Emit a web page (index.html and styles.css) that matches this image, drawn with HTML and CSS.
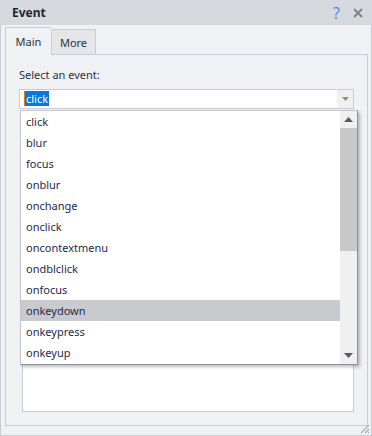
FILE: index.html
```html
<!DOCTYPE html>
<html lang="en">
<head>
    <meta charset="UTF-8">
    <title>Event</title>
    <link rel="stylesheet" href="styles.css">
</head>
<body>
    <div class="window">
        <div class="titlebar">
            <span class="title">Event</span>
            <span class="tb-icons">
                <span class="help">?</span>
                <svg class="close" width="10" height="10" viewBox="0 0 10 10"><path d="M1 1L9 9M9 1L1 9" stroke="#7a7f88" stroke-width="1.8"/></svg>
            </span>
        </div>

        <div class="tabs">
            <div class="tab active">Main</div>
            <div class="tab">More</div>
        </div>

        <div class="panel">
            <div class="label">Select an event:</div>
            <div class="combo">
                <span class="combo-text"><span class="sel">click</span></span>
                <span class="combo-btn">
                    <svg width="7" height="4" viewBox="0 0 7 4"><path d="M0 0H7L3.5 4Z" fill="#8a8d93"/></svg>
                </span>
            </div>
            <div class="body-box"></div>
        </div>

        <div class="dropdown">
            <ul class="items">
                <li>click</li>
                <li>blur</li>
                <li>focus</li>
                <li>onblur</li>
                <li>onchange</li>
                <li>onclick</li>
                <li>oncontextmenu</li>
                <li>ondblclick</li>
                <li>onfocus</li>
                <li class="hover">onkeydown</li>
                <li>onkeypress</li>
                <li>onkeyup</li>
            </ul>
            <div class="scrollbar">
                <div class="sb-btn">
                    <svg width="9" height="5" viewBox="0 0 9 5"><path d="M0 5H9L4.5 0Z" fill="#555a63"/></svg>
                </div>
                <div class="sb-track">
                    <div class="sb-thumb"></div>
                </div>
                <div class="sb-btn">
                    <svg width="9" height="5" viewBox="0 0 9 5"><path d="M0 0H9L4.5 5Z" fill="#555a63"/></svg>
                </div>
            </div>
        </div>

        <svg class="grip" width="12" height="12" viewBox="0 0 12 12">
            <path d="M11 3L3 11M11 7L7 11M11 10L10 11" stroke="#a9adb4" stroke-width="1.2"/>
        </svg>
    </div>
</body>
</html>
```

FILE: styles.css
```css
* {
    box-sizing: border-box;
}

body {
    margin: 0;
    font-family: "Noto Sans", "Open Sans", sans-serif;
    font-size: 11px;
    color: #2b3340;
}

.window {
    position: relative;
    width: 372px;
    height: 436px;
    background-color: #f0f1f5;
    border: 1px solid #c9ccd2;
    display: flex;
    flex-direction: column;
}

.titlebar {
    height: 25px;
    margin: -1px -1px 0 -1px;
    background-color: #d6d9de;
    display: flex;
    align-items: center;
    justify-content: space-between;
    padding: 0 9px 0 12px;
}

.title {
    font-weight: bold;
    font-size: 12px;
    color: #20262f;
}

.tb-icons {
    display: flex;
    align-items: center;
    gap: 13px;
}

.help {
    color: #4f8ff0;
    font-size: 16px;
    line-height: 16px;
}

.tabs {
    display: flex;
    padding: 2px 0 0 4px;
    height: 29px;
    align-items: flex-end;
}

.tab {
    width: 45px;
    height: 25px;
    border: 1px solid #c9ccd2;
    border-bottom: none;
    background-color: #e4e6ea;
    display: flex;
    align-items: center;
    justify-content: center;
    color: #2b3340;
}

.tab.active {
    width: 46px;
    height: 28px;
    background-color: #f0f1f5;
    margin-bottom: -1px;
    position: relative;
    z-index: 1;
    border-right: none;
}

.panel {
    flex-grow: 1;
    margin: 0 3px 9px 4px;
    border: 1px solid #c9ccd2;
    padding: 12px 12px 13px 12px;
    display: flex;
    flex-direction: column;
}

.label {
    height: 22px;
    padding-left: 1px;
}

.combo {
    height: 20px;
    margin-left: 1px;
    margin-right: 1px;
    border: 1px solid #c9ccd2;
    background-color: #fff;
    display: flex;
}

.combo-text {
    flex-grow: 1;
    padding-left: 4px;
    line-height: 17px;
}

.sel {
    background-color: #0a78d7;
    color: #fff;
    border-left: 1px solid #e07a1a;
    padding: 0 1px;
}

.combo-btn {
    width: 16px;
    background-color: #f0f0f0;
    display: flex;
    align-items: center;
    justify-content: center;
}

.body-box {
    flex-grow: 1;
    margin: 32px 1px 0 4px;
    background-color: #fff;
    border: 1px solid #c9ccd2;
}

.dropdown {
    position: absolute;
    left: 19px;
    top: 109px;
    width: 338px;
    height: 255px;
    background-color: #fff;
    border: 1px solid #c4c6cb;
    border-right-color: #8d9096;
    border-bottom-color: #8d9096;
    box-shadow: 2px 2px 3px rgba(0, 0, 0, 0.25);
    display: flex;
}

.items {
    list-style: none;
    margin: 0;
    padding: 0;
    flex-grow: 1;
}

.items li {
    height: 21px;
    line-height: 21px;
    padding-left: 5px;
    color: #1f2a4c;
}

.items li.hover {
    background-color: #c9cace;
}

.scrollbar {
    width: 17px;
    background-color: #f0f0f0;
    display: flex;
    flex-direction: column;
}

.sb-btn {
    height: 17px;
    display: flex;
    align-items: center;
    justify-content: center;
}

.sb-track {
    flex-grow: 1;
}

.sb-thumb {
    height: 123px;
    background-color: #c8c8c8;
}

.grip {
    position: absolute;
    right: 1px;
    bottom: 1px;
}
```
